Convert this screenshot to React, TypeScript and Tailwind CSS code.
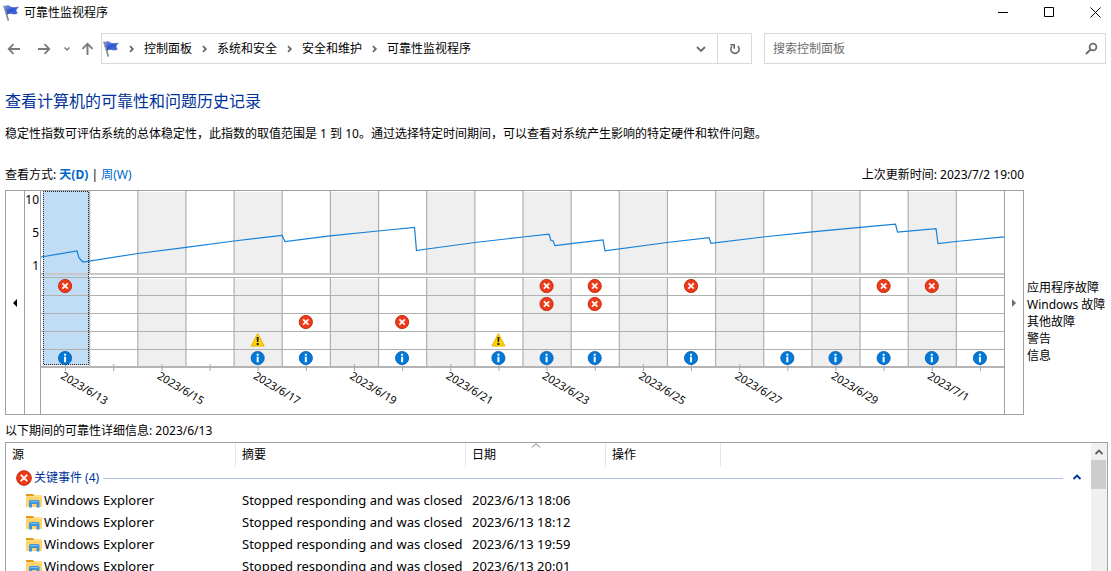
import React from 'react';

type EventKind = 'error' | 'warning' | 'info';

interface EventRow {
  kind: EventKind;
  label: string;
  days: number[];
}

const DAYS = 20;
const PLOT_LEFT = 16.5;
const DAY_WIDTH = 48.15;
const ROW_LINES = [87, 105, 123, 141, 159];

const eventRows: EventRow[] = [
  { kind: 'error', label: '应用程序故障', days: [0, 10, 11, 13, 17, 18] },
  { kind: 'error', label: 'Windows 故障', days: [10, 11] },
  { kind: 'error', label: '其他故障', days: [5, 7] },
  { kind: 'warning', label: '警告', days: [4, 9] },
  { kind: 'info', label: '信息', days: [0, 4, 5, 7, 9, 10, 11, 13, 15, 16, 17, 18, 19] },
];

const dateLabels = [
  '2023/6/13',
  '2023/6/15',
  '2023/6/17',
  '2023/6/19',
  '2023/6/21',
  '2023/6/23',
  '2023/6/25',
  '2023/6/27',
  '2023/6/29',
  '2023/7/1',
];

const stability: [number, number][] = [
  [16, 66], [52, 60], [54, 67], [58, 71], [113, 62.5], [161, 56.3], [209, 50], [257, 44.3],
  [260, 50.5], [305, 44.8], [353, 40], [389.5, 36.5], [391.5, 59.5], [402, 58], [450, 51.5],
  [498, 46], [524, 43.2], [526, 49.5], [528, 49.8], [530, 54.7], [546, 52.7], [578, 48.8],
  [580, 59.8], [642, 51.5], [684, 46.7], [686, 52.3], [738, 46], [787, 40.8], [835, 36.3],
  [870.5, 33.2], [872.5, 41.2], [911, 37.7], [913, 52.7], [931, 50.5], [979, 45.8],
];

const crumbs = ['控制面板', '系统和安全', '安全和维护', '可靠性监视程序'];

const events = [
  { source: 'Windows Explorer', summary: 'Stopped responding and was closed', date: '2023/6/13 18:06' },
  { source: 'Windows Explorer', summary: 'Stopped responding and was closed', date: '2023/6/13 18:12' },
  { source: 'Windows Explorer', summary: 'Stopped responding and was closed', date: '2023/6/13 19:59' },
  { source: 'Windows Explorer', summary: 'Stopped responding and was closed', date: '2023/6/13 20:01' },
];

function FlagIcon() {
  return (
    <svg width="16" height="16" viewBox="0 0 16 16" className="shrink-0">
      <defs>
        <linearGradient id="flagFill" x1="0" y1="0" x2="1" y2="1">
          <stop offset="0%" stopColor="#7f9cf0" />
          <stop offset="45%" stopColor="#2f55d0" />
          <stop offset="100%" stopColor="#4b74e0" />
        </linearGradient>
      </defs>
      <path
        d="M2.2 1.6 C4 .2 5.5 .4 7 1.6 C8.6 2.8 11 2.8 15.4 2 C13.8 3.6 13.2 4.6 13 5.6 C13.4 6.8 13.8 7.6 14.4 8.2 C11.5 9.6 9.6 9 8.2 8.6 C6.8 8.2 5.6 8.4 4.4 9.6 Z"
        fill="url(#flagFill)"
        stroke="#3450b0"
        strokeWidth=".5"
      />
      <path d="M1.1 1.2 L5.2 15" stroke="#66758a" strokeWidth="1.5" strokeLinecap="round" />
      <path d="M.9 1.6 L4.6 14.4" stroke="#b9c4d2" strokeWidth=".5" />
    </svg>
  );
}

function FolderIcon() {
  return (
    <svg width="16" height="16" viewBox="0 0 16 16" className="shrink-0">
      <path d="M0 1h7l1.5 2H0z" fill="#e09b10" />
      <path d="M0 3h7.5L9 2h7v12H0z" fill="#ffd36b" />
      <path d="M0 3h7.5L9 2h7v2H0z" fill="#ffdd86" />
      <path d="M3 14.5V8.5Q3 7 4.5 7H12Q13.5 7 13.5 8.5V14.5H10.5V11H6V14.5z" fill="#3c96dd" />
      <path d="M4.5 8.5h7.5" stroke="#7cc0f0" />
    </svg>
  );
}

function EventGlyph({ kind }: { kind: EventKind }) {
  if (kind === 'warning') {
    return (
      <g>
        <path d="M0 -6.5 L6.5 6 H-6.5 Z" fill="#fdd300" stroke="#eab308" strokeLinejoin="round" />
        <path d="M-1 -3 h2 l-.3 5 h-1.4 z M-1 3 h2 v2 h-2 z" fill="#1c1c1c" />
      </g>
    );
  }
  if (kind === 'info') {
    return (
      <g>
        <circle r="6.6" fill="#0078d7" stroke="#0b5cad" strokeWidth=".8" />
        <path d="M-1 -4.2 h2 v2 h-2 z M-1 -1.2 h2 v5.4 h-2 z" fill="#fff" />
      </g>
    );
  }
  return (
    <g>
      <circle r="6.6" fill="#f03a17" stroke="#b9290f" strokeWidth=".9" />
      <path d="M-2.7 -2.7 L2.7 2.7 M2.7 -2.7 L-2.7 2.7" stroke="#fff" strokeWidth="1.7" />
    </g>
  );
}

function Chevron({ d, color = '#6b6b6b' }: { d: string; color?: string }) {
  return (
    <svg width="10" height="10" viewBox="0 0 10 10" fill="none" stroke={color} strokeWidth="1.8" className="shrink-0">
      <path d={d} />
    </svg>
  );
}

function TitleBar() {
  const button = 'flex h-[25px] w-8 items-center justify-center';
  return (
    <header className="flex h-[26px] items-center pl-[3px]">
      <FlagIcon />
      <h1 className="ml-[5px] flex-1">可靠性监视程序</h1>
      <div className="flex gap-[14px] self-start">
        <button className={button} aria-label="最小化">
          <svg width="11" height="11" stroke="#000"><path d="M0 5.5h10" /></svg>
        </button>
        <button className={button} aria-label="最大化">
          <svg width="11" height="11" stroke="#000" fill="none"><path d="M.5 .5h9v9h-9z" /></svg>
        </button>
        <button className={button} aria-label="关闭">
          <svg width="11" height="11" stroke="#000"><path d="M.5 .5l10 10M10.5 .5l-10 10" /></svg>
        </button>
      </div>
    </header>
  );
}

function AddressBar() {
  return (
    <div className="mt-[7px] flex h-[31px] pr-[5px]">
      <div className="flex w-[101px] shrink-0 items-center pl-[7px]">
        <button aria-label="后退" className="w-[30px]">
          <svg width="14" height="12" fill="none" stroke="#7a7a7a" strokeWidth="1.8">
            <path d="M13 6H2M6.5 1.2L1.7 6l4.8 4.8" />
          </svg>
        </button>
        <button aria-label="前进" className="w-[26px]">
          <svg width="14" height="12" fill="none" stroke="#7a7a7a" strokeWidth="1.8">
            <path d="M1 6h11M7.5 1.2L12.3 6l-4.8 4.8" />
          </svg>
        </button>
        <button aria-label="最近浏览的位置" className="w-[18px]">
          <svg width="8" height="10" fill="none" stroke="#7a7a7a" strokeWidth="1.5">
            <path d="M1.5 3.5L4 6l2.5-2.5" />
          </svg>
        </button>
        <button aria-label="上移">
          <svg width="13" height="14" fill="none" stroke="#7a7a7a" strokeWidth="1.9">
            <path d="M6.5 13V2M1.5 6.8l5-5 5 5" />
          </svg>
        </button>
      </div>
      <nav className="flex flex-1 items-center border border-[#d9d9d9] pl-px">
        <FlagIcon />
        {crumbs.map((crumb) => (
          <React.Fragment key={crumb}>
            <span className="flex w-[25px] shrink-0 justify-center">
              <Chevron d="M3 2.2L5.8 5 3 7.8" />
            </span>
            <a href="#" className="whitespace-nowrap">{crumb}</a>
          </React.Fragment>
        ))}
        <button aria-label="以前的位置" className="ml-auto flex w-8 justify-center">
          <Chevron d="M1 3l4 4 4-4" />
        </button>
        <button aria-label="刷新" className="flex h-full w-[34px] items-center justify-center border-l border-[#d9d9d9]">
          <svg width="12" height="12" fill="none" stroke="#6b6b6b" strokeWidth="1.6">
            <path d="M3 3.2A4.2 4.2 0 1 0 8.8 3M1.2 1.8h4v4" />
          </svg>
        </button>
      </nav>
      <label className="ml-3 flex w-[342px] items-center border border-[#d9d9d9] pr-[7px] pl-2">
        <input
          type="text"
          aria-label="搜索控制面板"
          placeholder="搜索控制面板"
          className="min-w-0 flex-1 outline-none placeholder:text-[#6d6d6d]"
        />
        <svg width="13" height="13" fill="none" stroke="#6b6b6b" strokeWidth="1.8">
          <circle cx="8" cy="5" r="3.4" />
          <path d="M5.5 7.5L1 12" />
        </svg>
      </label>
    </div>
  );
}

function StabilityChart() {
  const days = Array.from({ length: DAYS }, (_, i) => i);
  const dayX = (i: number) => PLOT_LEFT + i * DAY_WIDTH;
  const centerX = (i: number) => dayX(i) + DAY_WIDTH / 2 - 0.5;
  const line = stability.map(([x, y], i) => `${i === 0 ? 'M' : 'L'} ${x} ${y}`).join(' ');

  return (
    <svg viewBox="0 0 979 223" className="block h-auto min-w-0 flex-1">
      {/* Day columns */}
      {days.map((i) =>
        i > 0 && i % 2 === 0 ? (
          <g key={i} fill="#efefef">
            <rect x={dayX(i)} y="1" width={DAY_WIDTH} height="81" />
            <rect x={dayX(i)} y="88" width={DAY_WIDTH} height="88" />
          </g>
        ) : null
      )}
      <rect x="18" y="0" width="46" height="174" fill="#c0ddf5" />
      {days.slice(1).map((i) => (
        <path key={i} d={`M ${dayX(i)} 0 V 82 M ${dayX(i)} 87 V 176`} stroke="#b0b0b0" strokeWidth="1.2" />
      ))}

      {/* Row separators and axes */}
      <path d="M16 83 H979" stroke="#c8c8c8" strokeWidth="2" />
      {ROW_LINES.map((y) => (
        <path key={y} d={`M16 ${y - 0.5} H979`} stroke="#b0b0b0" strokeWidth="1.2" />
      ))}
      <path d="M16 176 H979" stroke="#b4b4b4" strokeWidth="2" />
      <path d="M15.5 0 V223" stroke="#a0a0a0" />
      {days.map((i) => (
        <path key={i} d={`M ${centerX(i) + 0.5} 173 V 180`} stroke="#a9a9a9" />
      ))}

      <path d={line} fill="none" stroke="#1580d8" strokeWidth="1.2" />

      {/* Selected day */}
      <rect
        x="18.5"
        y="0.5"
        width="45"
        height="173"
        fill="none"
        stroke="#222"
        strokeDasharray="1 1"
        strokeDashoffset="0.5"
      />

      {/* Events */}
      {eventRows.map((row, r) =>
        row.days.map((day) => (
          <g key={`${row.label}-${day}`} transform={`translate(${centerX(day)} ${95 + r * 18})`}>
            <title>{row.label}</title>
            <EventGlyph kind={row.kind} />
          </g>
        ))
      )}

      {/* Axis labels */}
      <text x="14" y="13" textAnchor="end" className="text-xs">10</text>
      <text x="14" y="46" textAnchor="end" className="text-xs">5</text>
      <text x="14" y="79" textAnchor="end" className="text-xs">1</text>
      {dateLabels.map((label, i) => (
        <text key={label} transform={`translate(${centerX(i * 2) - 5} 187) rotate(31)`} className="text-[11px]">
          {label}
        </text>
      ))}
    </svg>
  );
}

function ChartPanel() {
  return (
    <section className="mt-[7px] flex">
      <div className="flex min-w-0 flex-1 border border-[#a0a0a0]">
        <button aria-label="向前" className="flex w-[19px] shrink-0 items-center justify-center border-r border-[#a0a0a0]">
          <svg width="4" height="8"><path d="M4 0v8L0 4z" fill="#000" /></svg>
        </button>
        <StabilityChart />
        <button aria-label="向后" className="flex w-[19px] shrink-0 items-center justify-center border-l border-[#a0a0a0]">
          <svg width="4" height="8"><path d="M0 0v8l4-4z" fill="#6d6d6d" /></svg>
        </button>
      </div>
      <ul className="mt-[89px] ml-[3px] w-[81px] shrink-0 leading-[17px] whitespace-nowrap">
        {eventRows.map((row) => (
          <li key={row.label}>{row.label}</li>
        ))}
      </ul>
    </section>
  );
}

function DetailsTable() {
  const head = 'relative border-r border-[#e5e5e5] pl-[6px] text-left font-normal';
  return (
    <section className="mt-[3px] flex min-h-0 flex-1 overflow-hidden border border-b-0 border-[#a0a0a0]">
      <div className="min-w-0 flex-1 overflow-hidden">
        <table className="w-full table-fixed border-separate border-spacing-0">
          <colgroup>
            <col className="w-[230px]" />
            <col className="w-[230px]" />
            <col className="w-[140px]" />
            <col className="w-[115px]" />
            <col />
          </colgroup>
          <thead>
            <tr className="h-6">
              <th className={head}>源</th>
              <th className={head}>摘要</th>
              <th className={head}>
                日期
                <svg width="9" height="5" fill="none" stroke="#6d6d6d" className="absolute top-0 left-1/2 -translate-x-1/2">
                  <path d="M.5 4.5l4-4 4 4" />
                </svg>
              </th>
              <th className={head}>操作</th>
              <td />
            </tr>
          </thead>
          <tbody>
            <tr className="h-[23px] text-[#003399]">
              <td colSpan={5} className="align-top">
                <div className="flex h-[22px] items-center pr-2 pl-[10px]">
                  <svg width="16" height="16" viewBox="-8 -8 16 16" className="shrink-0">
                    <circle r="7.3" fill="#f03a17" stroke="#b9290f" />
                    <path d="M-3.2 -3.2 L3.2 3.2 M3.2 -3.2 L-3.2 3.2" stroke="#fff" strokeWidth="1.9" />
                  </svg>
                  <span className="ml-[2px]">关键事件 (4)</span>
                  <span className="mx-1 h-px flex-1 bg-[#b0c0e6]" />
                  <button aria-label="折叠" className="ml-1 flex w-3 justify-center">
                    <Chevron d="M1.5 6L5 2.5 8.5 6" color="#003399" />
                  </button>
                </div>
              </td>
            </tr>
            {events.map((event) => (
              <tr key={event.date} className="h-[22px] text-[13px]">
                <td>
                  <div className="flex items-center gap-[2px] pl-5">
                    <FolderIcon />
                    {event.source}
                  </div>
                </td>
                <td className="pl-[6px] whitespace-nowrap">{event.summary}</td>
                <td className="pl-[6px] whitespace-nowrap">{event.date}</td>
                <td />
                <td />
              </tr>
            ))}
          </tbody>
        </table>
      </div>
      <div className="flex w-4 shrink-0 flex-col bg-[#f0f0f0] pr-px">
        <button aria-label="向上滚动" className="flex h-[17px] shrink-0 items-center justify-center">
          <Chevron d="M1.5 7L5 3.5 8.5 7" color="#606060" />
        </button>
        <div className="h-[29px] shrink-0 bg-[#cdcdcd]" />
      </div>
    </section>
  );
}

export default function App() {
  return (
    <div
      lang="zh-CN"
      className="flex h-screen flex-col overflow-hidden bg-white font-['Noto_Sans','Noto_Sans_CJK_SC',sans-serif] text-xs text-black"
    >
      <TitleBar />
      <AddressBar />
      <main className="flex min-h-0 flex-1 flex-col pr-[3px] pl-[5px]">
        <h2 className="mt-[25px] text-base leading-6 text-[#003399]">查看计算机的可靠性和问题历史记录</h2>
        <p className="mt-[13px]">
          稳定性指数可评估系统的总体稳定性，此指数的取值范围是 1 到 10。通过选择特定时间期间，可以查看对系统产生影响的特定硬件和软件问题。
        </p>
        <div className="mt-[25px] flex justify-between pr-[84px]">
          <div>
            查看方式: <a href="#" className="font-bold text-[#0066cc]">天(D)</a> |{' '}
            <a href="#" className="text-[#0066cc]">周(W)</a>
          </div>
          <div>上次更新时间: 2023/7/2 19:00</div>
        </div>
        <ChartPanel />
        <p className="mt-2">以下期间的可靠性详细信息: 2023/6/13</p>
        <DetailsTable />
      </main>
    </div>
  );
}
